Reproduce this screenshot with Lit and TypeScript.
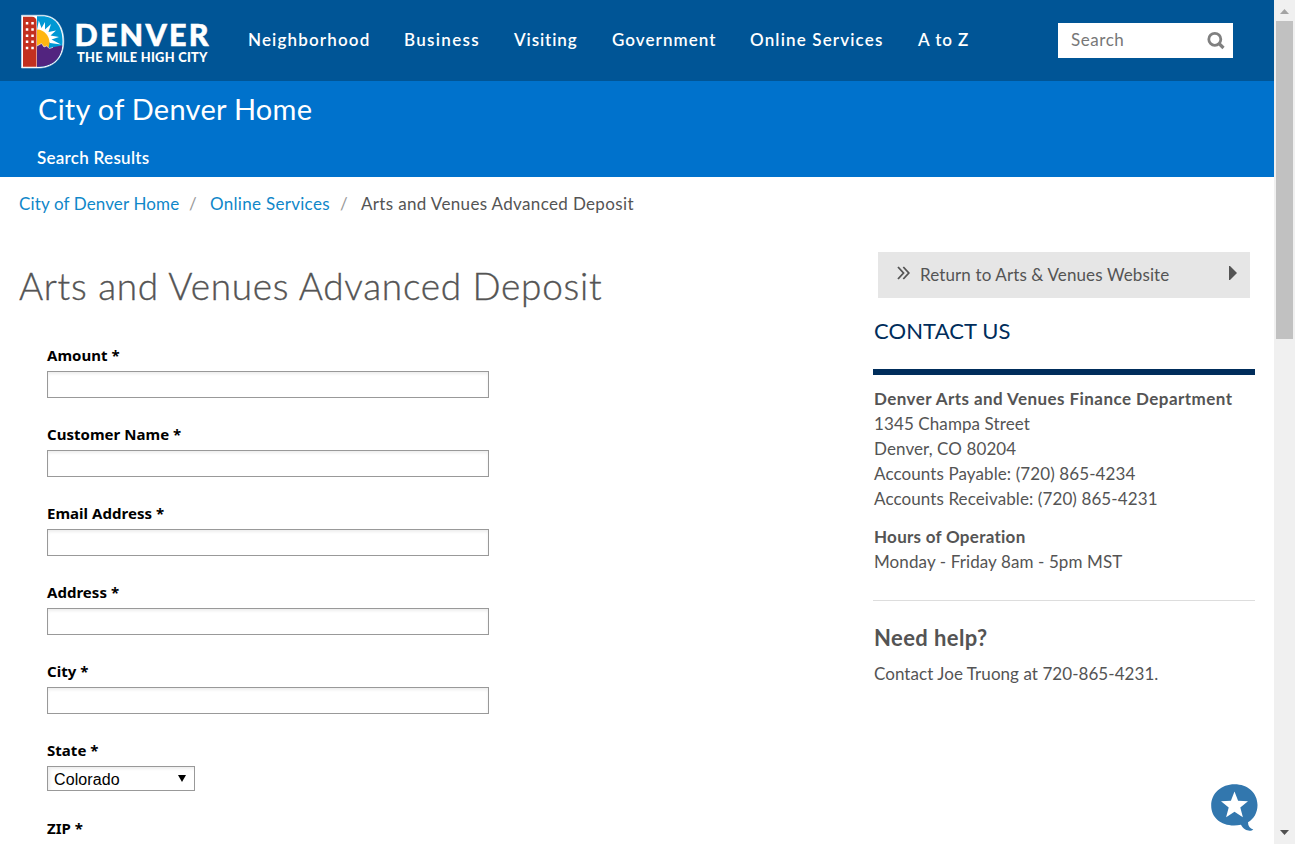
import { LitElement, html, css, svg } from "lit";
import { customElement } from "lit/decorators.js";

const NAV = ["Neighborhood", "Business", "Visiting", "Government", "Online Services", "A to Z"];
const FIELDS = ["Amount", "Customer Name", "Email Address", "Address", "City"];
const WINDOW_ROWS = [23, 29.2, 35.4, 41.6, 47.8];

@customElement("app-root")
export class AppRoot extends LitElement {
  static styles = css`
    :host { display: flex; width: 100%; height: 844px; overflow: hidden; background: #fff;
      font-family: Lato, "Liberation Sans", sans-serif; font-size: 17px; color: #545454; }
    * { box-sizing: border-box; }
    a { color: inherit; text-decoration: none; }
    .page { flex: 1; min-width: 0; position: relative; }
    .top { height: 81px; background: #005596; display: flex; align-items: flex-start; }
    .logo { display: block; width: 240px; height: 80px; flex: none; }
    .nav { display: flex; padding: 29px 0 0 8px; color: #fff; font-weight: 600; letter-spacing: 1.15px; line-height: 22px; white-space: nowrap; }
    .nav a { flex: none; }
    .n0 { width: 156px; } .n1 { width: 110px; letter-spacing: 1.3px; } .n2 { width: 98px; letter-spacing: .9px; }
    .n3 { width: 138px; letter-spacing: 1.05px; } .n4 { width: 168px; } .n5 { width: 60px; letter-spacing: .9px; }
    .search { margin: 23px 41px 0 auto; width: 175px; height: 35px; background: #fff; display: flex; align-items: center;
      justify-content: space-between; padding: 0 7px 0 13px; color: #777; letter-spacing: .55px; }
    .search span { margin-top: -2px; }
    .search svg { display: block; width: 20px; height: 20px; }
    .band { height: 96px; background: #0072cc; color: #fff; padding: 9px 0 0 37px; }
    .site { font-size: 29px; line-height: 38px; letter-spacing: .27px; padding-left: 1px; }
    .sub { margin-top: 19px; line-height: 22px; font-weight: 600; letter-spacing: .27px; }
    .crumbs { display: flex; height: 54px; padding: 16px 0 0 19px; line-height: 22px; white-space: nowrap; letter-spacing: .22px; }
    .crumbs a { color: #0f87c9; }
    .c0 { width: 160px; letter-spacing: .13px; } .c1 { width: 120px; letter-spacing: .3px; } .c2 { letter-spacing: .35px; }
    .slash { color: #999; width: 31px; padding-left: 10px; }
    .cols { display: flex; }
    .main { width: 873px; flex: none; }
    h1 { margin: 29px 0 1px 19px; font-size: 37px; font-weight: 300; line-height: 52px; letter-spacing: .7px; white-space: nowrap;
      -webkit-text-stroke: .35px #545454; }
    .form { padding: 32px 0 0 47px; color: #000; font-family: "Noto Sans", "Open Sans", sans-serif; }
    .field { height: 79px; }
    .label { display: block; font-size: 15px; font-weight: 700; line-height: 20px; height: 26px; white-space: nowrap; letter-spacing: .03px; }
    .input { width: 442px; height: 27px; border: 1px solid #999; box-shadow: inset 0 2px 3px #eee; }
    .select { width: 148px; height: 25px; border: 1px solid #999; box-shadow: inset 2px 2px 3px #eee; display: flex; align-items: center;
      justify-content: space-between; padding: 2px 8px 0 6px; font: 16px "Liberation Sans", Arial, sans-serif; letter-spacing: .1px; }
    .select svg { width: 8px; height: 7px; margin-top: -3px; }
    .state { height: 78px; }
    .side { width: 382px; padding-top: 21px; line-height: 25px; white-space: nowrap; }
    .return { margin-left: 5px; width: 372px; height: 46px; background: #e6e6e6; display: flex; align-items: center; padding: 0 13px 0 19px; letter-spacing: .12px; }
    .chev { width: 13px; height: 14px; margin-right: 10px; margin-top: -4px; }
    .return span { margin-top: -1px; }
    .arrow { width: 8px; height: 14px; margin: -4px 0 0 auto; }
    h2 { margin: 18px 0 0 1px; font-size: 22px; font-weight: 400; line-height: 30px; color: #002d5b; letter-spacing: .1px; }
    .rule { height: 6px; background: #002d5b; margin: 23px 0 11px; }
    .block { margin: 0 0 13px 1px; letter-spacing: .1px; }
    .block .b { font-weight: 700; letter-spacing: .44px; }
    .block .hours { letter-spacing: .27px; }
    .line { border-top: 1px solid #ddd; margin-top: 26px; }
    h3 { margin: 22px 0 0 1px; font-size: 22px; line-height: 30px; font-weight: 700; letter-spacing: .4px; }
    .help { margin: 8px 0 0 1px; letter-spacing: .06px; }
    .chat { position: absolute; left: 1210px; top: 783px; width: 50px; height: 50px; }
    .scroll { width: 21px; flex: none; background: #f0f0f0; display: flex; flex-direction: column; align-items: center; }
    .scroll svg { width: 21px; height: 21px; display: block; flex: none; }
    .thumb { width: 17px; height: 318px; background: #c1c1c1; }
    .down { margin-top: auto; }
  `;

  private logo() {
    return html`<svg class="logo" viewBox="0 0 240 80">
      <defs><clipPath id="d"><path d="M37 16.300h5c13 0 20.500 10 20.500 25.300S54 66.700 39 66.700h-2z"/></clipPath></defs>
      <path d="M21.500 15.200h20.300c13.500 0 22 10.200 22 26.300s-10 26.500-25.500 26.500H21.500z" fill="#fff" stroke="#dce8f3" stroke-width=".6"/>
      <g clip-path="url(#d)">
        <path d="M36 15h30v55H36z" fill="#0098d4"/>
        <path d="M37 30L38.800 20.500 41.500 28 45 22 45 29.500 51 24 48.500 32 56 30.500 50.500 35.500 59 37 51.500 39.500 61 44.500 50 43z" fill="#fff"/>
        <path d="M37 29.500c7.500 0 12.500 6.500 12.500 13.500l-1 5H37z" fill="#ffb612"/>
        <path d="M37 46l4.500-2.500 2.500 3.500 2.500-1 3 2.500 3.500-1.200 8.500-1.800 3 0v23H37z" fill="#52247f"/>
        <path d="M37 46l4.500-2.500 2.500 3.500 2.500-1 3 2.500 3.500-1.200" fill="none" stroke="#fff" stroke-width=".6"/>
      </g>
      <path d="M23 16.800h9c2.700 0 4.500 1.800 4.500 5v45H23z" fill="#c3301f"/>
      ${WINDOW_ROWS.map((y) => svg`<path d="M25.800 ${y - 1}h2.500v2.500h-2.500zM31.300 ${y - 1}h2.500v2.500h-2.500z" fill="#fff"/>`)}
      <text x="74.500" y="45.500" textLength="134" lengthAdjust="spacing" font-family="Lato" font-weight="900" font-size="30.500" fill="#fff" stroke="#fff" stroke-width=".5">DENVER</text>
      <text x="77" y="62" textLength="130.500" lengthAdjust="spacing" font-family="Lato" font-weight="900" font-size="12.800" fill="#fff">THE MILE HIGH CITY</text>
    </svg>`;
  }

  render() {
    return html`
      <div class="page">
        <header class="top">
          ${this.logo()}
          <nav class="nav">${NAV.map((n, i) => html`<a class="n${i}">${n}</a>`)}</nav>
          <div class="search"><span>Search</span>
            <svg viewBox="0 0 20 20" fill="none" stroke="#808080"><circle cx="8.800" cy="8.300" r="6" stroke-width="2.800"/><path d="M13 12.500l4.500 4.500" stroke-width="3.200"/></svg>
          </div>
        </header>
        <div class="band"><div class="site"><span>City of Denver Home</span></div><div class="sub"><span>Search Results</span></div></div>
        <div class="crumbs"><a class="c0">City of Denver Home</a><span class="slash">/</span><a class="c1">Online Services</a><span class="slash">/</span><span class="c2">Arts and Venues Advanced Deposit</span></div>
        <div class="cols">
          <main class="main">
            <h1>Arts and Venues Advanced Deposit</h1>
            <div class="form">
              ${FIELDS.map((f) => html`<div class="field"><label class="label">${f} *</label><div class="input"></div></div>`)}
              <div class="state"><label class="label">State *</label>
                <div class="select"><span>Colorado</span><svg viewBox="0 0 8 7"><path d="M0 0h8L4 7z"/></svg></div></div>
              <label class="label">ZIP *</label>
            </div>
          </main>
          <aside class="side">
            <a class="return">
              <svg class="chev" viewBox="0 0 13 14" fill="none" stroke="#545454" stroke-width="1.800"><path d="M1 1l5.500 6L1 13M6.300 1l5.500 6-5.500 6"/></svg>
              <span>Return to Arts &amp; Venues Website</span>
              <svg class="arrow" viewBox="0 0 8 14"><path d="M0 0h1l7 7-7 7H0z" fill="#545454"/></svg>
            </a>
            <h2>CONTACT US</h2>
            <div class="rule"></div>
            <div class="block"><div class="b">Denver Arts and Venues Finance Department</div><div>1345 Champa Street</div><div>Denver, CO 80204</div><div>Accounts Payable: (720) 865-4234</div><div>Accounts Receivable: (720) 865-4231</div></div>
            <div class="block"><div class="b hours">Hours of Operation</div><div>Monday - Friday 8am - 5pm MST</div></div>
            <div class="line"></div>
            <h3>Need help?</h3>
            <div class="help">Contact Joe Truong at 720-865-4231.</div>
          </aside>
        </div>
        <svg class="chat" viewBox="0 0 50 50"><path d="M24.500 1.200C37.500 1.200 47.500 9.800 47.500 22c0 8-3.800 14-9.500 17.300 0 4 2 6.500 5.300 7.200-2.500 2.300-9 1.800-12.300-4.700C14 45 1.200 36.500 1.200 22.500 1.200 10 11.500 1.200 24.500 1.200z" fill="#3277ae"/>
          <path d="M24.500 8.500l3.600 9.300 9.900.5-7.700 6.300 2.600 9.700-8.400-5.500-8.400 5.500 2.600-9.700-7.700-6.300 9.900-.5z" fill="#fff"/></svg>
      </div>
      <div class="scroll">
        <svg viewBox="0 0 21 21"><path d="M6 14h9l-4.500-5z" fill="#a3a3a3"/></svg>
        <div class="thumb"></div>
        <svg class="down" viewBox="0 0 21 21"><path d="M6 7h9l-4.500 5z" fill="#505050"/></svg>
      </div>`;
  }
}
